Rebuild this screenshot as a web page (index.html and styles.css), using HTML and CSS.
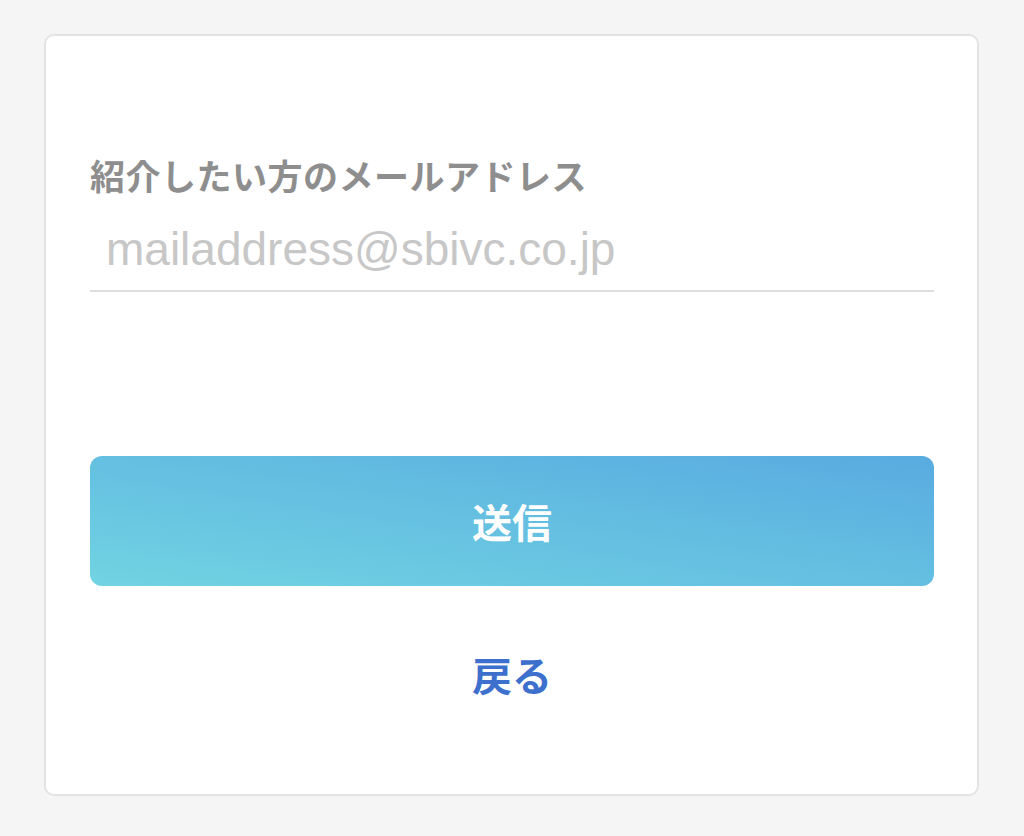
FILE: index.html
```html
<!DOCTYPE html>
<html lang="ja">
<head>
<meta charset="utf-8">
<title>紹介</title>
<link rel="stylesheet" href="styles.css">
</head>
<body>
<div class="card">
  <form class="form">
    <label class="label" for="email">紹介したい方のメールアドレス</label>
    <input class="input" id="email" type="email" placeholder="mailaddress@sbivc.co.jp">
    <button class="submit" type="button">送信</button>
    <a class="back" href="#">戻る</a>
  </form>
</div>
</body>
</html>
```

FILE: styles.css
```css
html, body {
  margin: 0;
  padding: 0;
  background: #f5f5f5;
}

body {
  font-family: "Noto Sans CJK JP", "Liberation Sans", sans-serif;
}

.card {
  box-sizing: border-box;
  margin: 34px 0 0 44px;
  width: 935px;
  height: 762px;
  background: #ffffff;
  border: 2px solid #e3e3e3;
  border-radius: 10px;
  padding: 118px 43px 0 44px;
}

.form {
  display: flex;
  flex-direction: column;
}

.label {
  display: block;
  font-size: 35px;
  line-height: 42px;
  font-weight: 700;
  color: #8e8e8e;
  letter-spacing: 0.5px;
}

.input {
  box-sizing: border-box;
  margin-top: 22px;
  height: 74px;
  width: 100%;
  padding: 0 16px 10px;
  border: none;
  border-bottom: 2px solid #dedede;
  outline: none;
  background: transparent;
  font-family: "Liberation Sans", Arial, sans-serif;
  font-size: 46px;
  color: #333333;
}

.input::placeholder {
  color: #c7c7c7;
  opacity: 1;
}

.submit {
  margin-top: 164px;
  height: 130px;
  width: 100%;
  border: none;
  border-radius: 12px;
  background: linear-gradient(to top right, #71d3e2, #58abe0);
  color: #ffffff;
  font-family: "Noto Sans CJK JP", sans-serif;
  font-size: 40px;
  font-weight: 700;
  line-height: 60px;
  display: flex;
  align-items: center;
  justify-content: center;
  padding: 0;
}

.back {
  display: block;
  margin-top: 58px;
  text-align: center;
  font-size: 40px;
  line-height: 60px;
  font-weight: 700;
  color: #3d6fcd;
  text-decoration: none;
}
```
